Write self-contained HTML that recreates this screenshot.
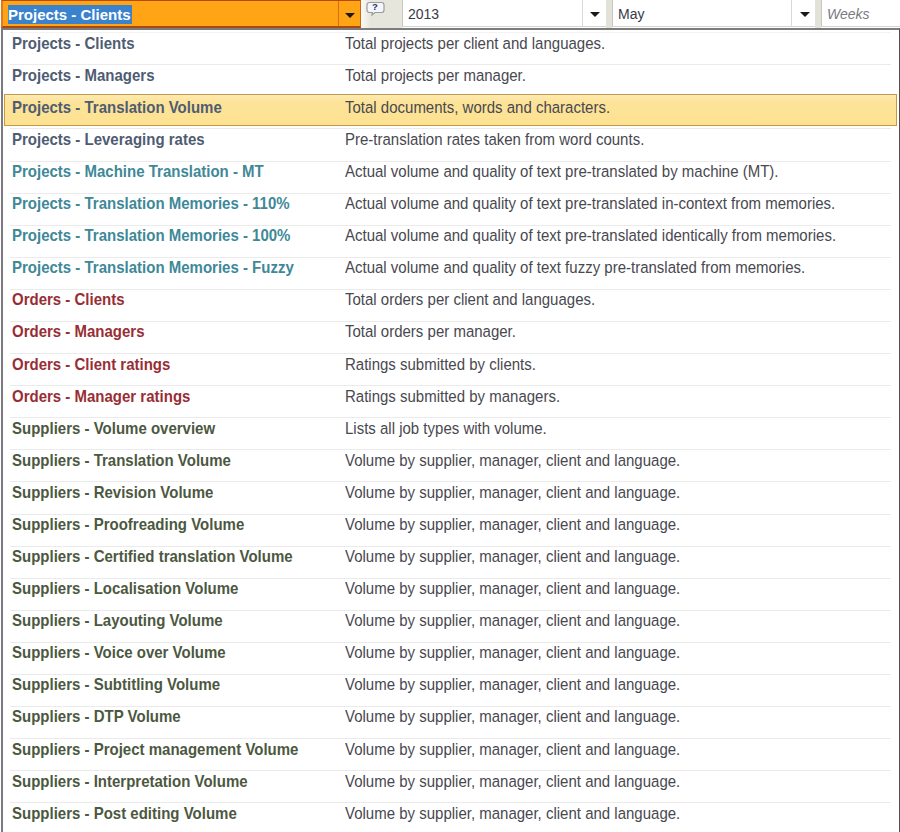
<!DOCTYPE html>
<html><head><meta charset="utf-8">
<style>
html,body{margin:0;padding:0;background:#fff;}
body{width:900px;height:832px;overflow:hidden;position:relative;font-family:"Liberation Sans",sans-serif;}
.abs{position:absolute;}
/* toolbar */
#combo{position:absolute;left:1px;top:0;width:360px;height:28px;box-sizing:border-box;background:#ffa414;border-top:1px solid #b84a00;border-left:2px solid #e07a20;border-right:1px solid #c86a10;border-bottom:2px solid #a84a10;}
#sel{position:absolute;left:8px;top:5px;width:124px;height:19px;background:#3b82cc;}
#seltxt{position:absolute;left:8px;top:5px;font-weight:bold;font-size:15px;color:#fff;line-height:20px;white-space:nowrap;}
#cdiv{position:absolute;left:338px;top:1px;width:1px;height:25px;background:#d86e10;}
.arrow{position:absolute;width:0;height:0;border-left:5px solid transparent;border-right:5px solid transparent;border-top:5px solid #1a1a1a;}
#help{position:absolute;left:361px;top:0;width:41px;height:28px;background:#e6e6dc;}
.field{position:absolute;top:0;height:26px;background:#fff;border-bottom:1px solid #d4d4d0;}
.fdiv{position:absolute;top:0;width:1px;height:26px;background:#d8d8d4;}
.gap{position:absolute;top:0;height:28px;background:#e2e2d8;}
.ftxt{position:absolute;top:5px;font-size:14px;color:#3a3a46;line-height:18px;white-space:nowrap;}
#panel{position:absolute;left:1px;top:28px;width:899px;height:810px;box-sizing:border-box;border-top:2px solid #7c7c7c;border-left:2px solid #7a7a80;border-right:1px solid #505050;}
.row{position:absolute;left:0;width:900px;height:32px;white-space:nowrap;}
.row .t{position:absolute;left:12px;top:0px;font-weight:bold;font-size:15px;line-height:20px;transform:scaleY(1.1);transform-origin:0 10px;}
.row .d{position:absolute;left:345px;top:0px;font-size:15px;line-height:20px;color:#48484f;transform:scaleY(1.1);transform-origin:0 10px;}
.s .t{color:#4e5c72;}
.t .t{color:#408898;}
.r .t{color:#982e34;}
.o .t{color:#4c5840;}
.hl::before{content:"";position:absolute;left:4px;top:-3px;width:893px;height:32px;box-sizing:border-box;background:linear-gradient(#fdebb8 0px,#fde7a4 3px,#fde398 8px,#fde292 100%);border:1px solid #c49a48;}
.sep{position:absolute;left:10px;width:881px;height:1px;background:#ebebeb;}
</style></head><body>
<div id="combo"></div>
<div id="sel"></div>
<div id="seltxt">Projects - Clients</div>
<div id="cdiv"></div>
<div class="arrow" style="left:345px;top:13px"></div>
<div id="help">
<svg width="41" height="28" style="position:absolute;left:0;top:0">
<defs><linearGradient id="hg" x1="0" x2="1"><stop offset="0" stop-color="#fbfbf6"/><stop offset="1" stop-color="#e6e6dc"/></linearGradient></defs>
<rect x="0" y="0" width="10" height="28" fill="url(#hg)"/>
<path d="M8.5 2.5 h12 a2.5 2.5 0 0 1 2.5 2.5 v5 a2.5 2.5 0 0 1 -2.5 2.5 h-6.5 l-3 2.5 l0.5 -2.5 h-3 a2.5 2.5 0 0 1 -2.5 -2.5 v-5 a2.5 2.5 0 0 1 2.5 -2.5 z" fill="#f5f5fd" stroke="#9c9ca0" stroke-width="1.2"/>
<text x="13.8" y="10.2" font-family="Liberation Sans" font-weight="bold" font-size="9.5" fill="#283060" text-anchor="middle">?</text>
</svg>
</div>
<div class="field" style="left:402px;width:204px;border-left:1px solid #c8c8c0;"></div>
<div class="fdiv" style="left:582px"></div>
<div class="arrow" style="left:590px;top:12px"></div>
<div class="ftxt" style="left:408px">2013</div>
<div class="gap" style="left:606px;width:6px"></div>
<div class="field" style="left:612px;width:203px;border-left:1px solid #c8c8c0;"></div>
<div class="fdiv" style="left:791px"></div>
<div class="arrow" style="left:800px;top:12px"></div>
<div class="ftxt" style="left:618px">May</div>
<div class="gap" style="left:815px;width:6px"></div>
<div class="field" style="left:821px;width:79px;border-left:1px solid #c8c8c0;"></div>
<div class="ftxt" style="left:827px;font-style:italic;color:#7a7a80">Weeks</div>
<div id="panel"></div>
<div class="sep" style="top:32px;background:#f3f3f3"></div>
<div class="sep" style="top:64px"></div>
<div class="sep" style="top:96px"></div>
<div class="sep" style="top:128px"></div>
<div class="sep" style="top:161px"></div>
<div class="sep" style="top:193px"></div>
<div class="sep" style="top:225px"></div>
<div class="sep" style="top:257px"></div>
<div class="sep" style="top:289px"></div>
<div class="sep" style="top:321px"></div>
<div class="sep" style="top:353px"></div>
<div class="sep" style="top:385px"></div>
<div class="sep" style="top:417px"></div>
<div class="sep" style="top:449px"></div>
<div class="sep" style="top:481px"></div>
<div class="sep" style="top:514px"></div>
<div class="sep" style="top:546px"></div>
<div class="sep" style="top:578px"></div>
<div class="sep" style="top:610px"></div>
<div class="sep" style="top:642px"></div>
<div class="sep" style="top:674px"></div>
<div class="sep" style="top:706px"></div>
<div class="sep" style="top:738px"></div>
<div class="sep" style="top:770px"></div>
<div class="sep" style="top:802px"></div>
<div class="sep" style="top:834px"></div>
<div class="row s" style="top:32.60px"><span class="t">Projects - Clients</span><span class="d">Total projects per client and languages.</span></div>
<div class="row s" style="top:64.69px"><span class="t">Projects - Managers</span><span class="d">Total projects per manager.</span></div>
<div class="row s hl" style="top:96.78px"><span class="t">Projects - Translation Volume</span><span class="d">Total documents, words and characters.</span></div>
<div class="row s" style="top:128.87px"><span class="t">Projects - Leveraging rates</span><span class="d">Pre-translation rates taken from word counts.</span></div>
<div class="row t" style="top:160.96px"><span class="t">Projects - Machine Translation - MT</span><span class="d">Actual volume and quality of text pre-translated by machine (MT).</span></div>
<div class="row t" style="top:193.05px"><span class="t">Projects - Translation Memories - 110%</span><span class="d">Actual volume and quality of text pre-translated in-context from memories.</span></div>
<div class="row t" style="top:225.14px"><span class="t">Projects - Translation Memories - 100%</span><span class="d">Actual volume and quality of text pre-translated identically from memories.</span></div>
<div class="row t" style="top:257.23px"><span class="t">Projects - Translation Memories - Fuzzy</span><span class="d">Actual volume and quality of text fuzzy pre-translated from memories.</span></div>
<div class="row r" style="top:289.32px"><span class="t">Orders - Clients</span><span class="d">Total orders per client and languages.</span></div>
<div class="row r" style="top:321.41px"><span class="t">Orders - Managers</span><span class="d">Total orders per manager.</span></div>
<div class="row r" style="top:353.50px"><span class="t">Orders - Client ratings</span><span class="d">Ratings submitted by clients.</span></div>
<div class="row r" style="top:385.59px"><span class="t">Orders - Manager ratings</span><span class="d">Ratings submitted by managers.</span></div>
<div class="row o" style="top:417.68px"><span class="t">Suppliers - Volume overview</span><span class="d">Lists all job types with volume.</span></div>
<div class="row o" style="top:449.77px"><span class="t">Suppliers - Translation Volume</span><span class="d">Volume by supplier, manager, client and language.</span></div>
<div class="row o" style="top:481.86px"><span class="t">Suppliers - Revision Volume</span><span class="d">Volume by supplier, manager, client and language.</span></div>
<div class="row o" style="top:513.95px"><span class="t">Suppliers - Proofreading Volume</span><span class="d">Volume by supplier, manager, client and language.</span></div>
<div class="row o" style="top:546.04px"><span class="t">Suppliers - Certified translation Volume</span><span class="d">Volume by supplier, manager, client and language.</span></div>
<div class="row o" style="top:578.13px"><span class="t">Suppliers - Localisation Volume</span><span class="d">Volume by supplier, manager, client and language.</span></div>
<div class="row o" style="top:610.22px"><span class="t">Suppliers - Layouting Volume</span><span class="d">Volume by supplier, manager, client and language.</span></div>
<div class="row o" style="top:642.31px"><span class="t">Suppliers - Voice over Volume</span><span class="d">Volume by supplier, manager, client and language.</span></div>
<div class="row o" style="top:674.40px"><span class="t">Suppliers - Subtitling Volume</span><span class="d">Volume by supplier, manager, client and language.</span></div>
<div class="row o" style="top:706.49px"><span class="t">Suppliers - DTP Volume</span><span class="d">Volume by supplier, manager, client and language.</span></div>
<div class="row o" style="top:738.58px"><span class="t">Suppliers - Project management Volume</span><span class="d">Volume by supplier, manager, client and language.</span></div>
<div class="row o" style="top:770.67px"><span class="t">Suppliers - Interpretation Volume</span><span class="d">Volume by supplier, manager, client and language.</span></div>
<div class="row o" style="top:802.76px"><span class="t">Suppliers - Post editing Volume</span><span class="d">Volume by supplier, manager, client and language.</span></div>
</body></html>
